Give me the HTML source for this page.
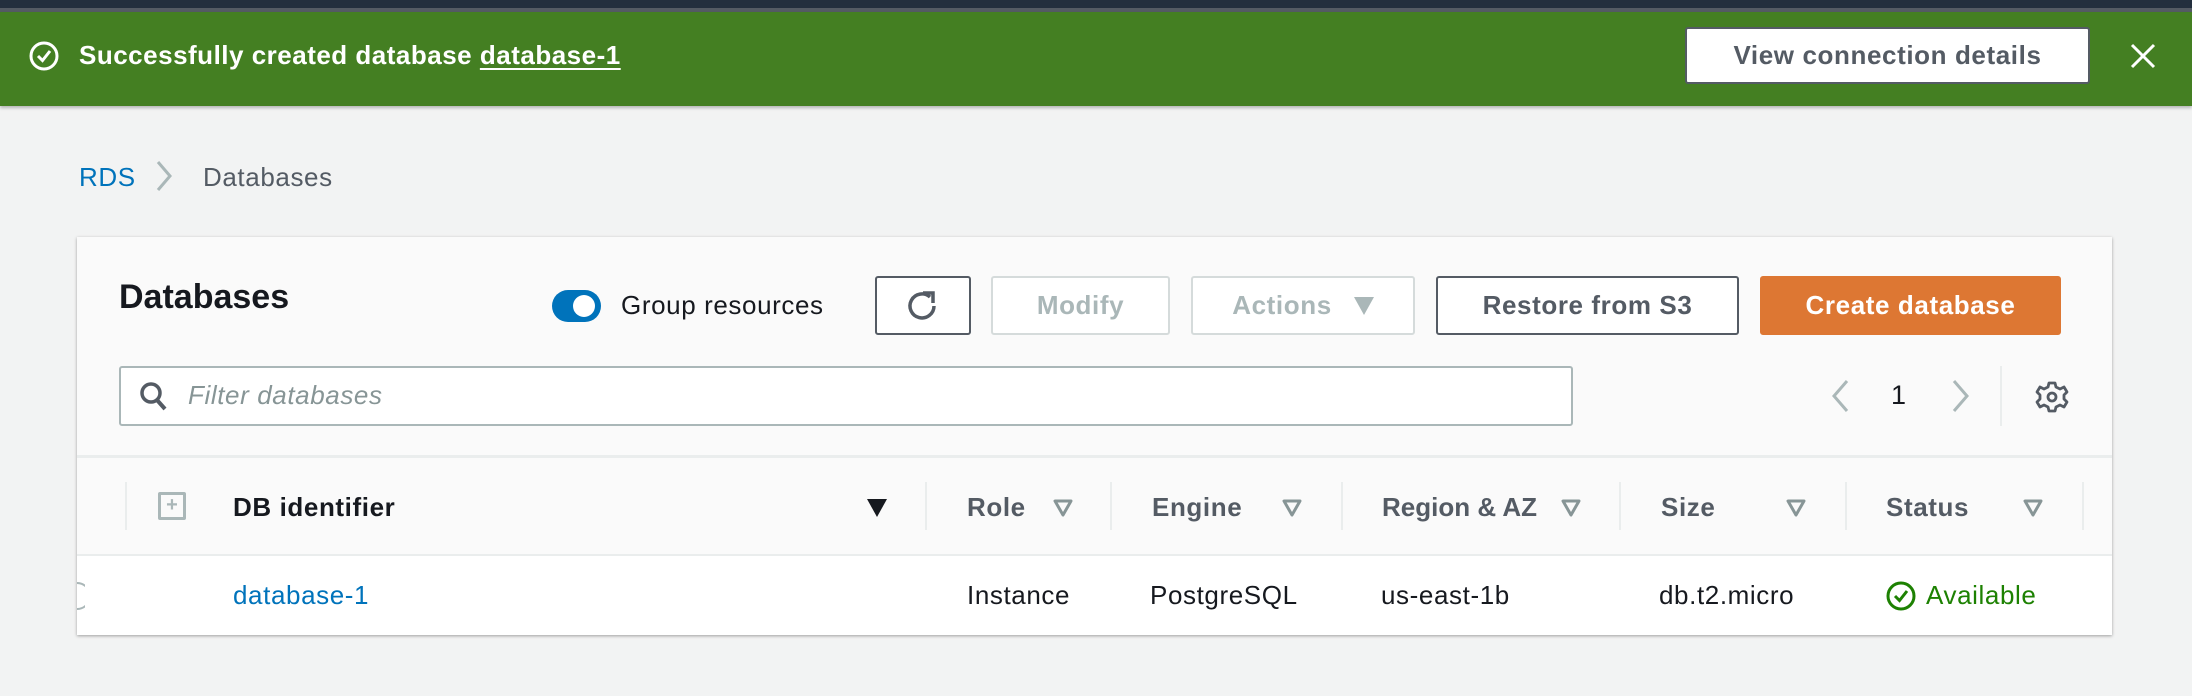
<!DOCTYPE html>
<html><head><meta charset="utf-8"><style>
*{margin:0;padding:0;box-sizing:border-box}
body{width:2192px;height:696px;background:#f2f3f3;font-family:"Liberation Sans",sans-serif;position:relative;overflow:hidden;color:#16191f;letter-spacing:0.6px}
.a{position:absolute;white-space:nowrap}
.btn{position:absolute;border:2px solid #545b64;border-radius:3px;background:#fff;font-weight:bold;font-size:26px;color:#545b64;display:flex;align-items:center;justify-content:center}
.dis{border-color:#d5dbdb;color:#aab7b8;background:#fff}
.hd{font-size:26px;font-weight:bold;color:#545b64;top:492px}
.vd{position:absolute;top:482px;width:2px;height:48px;background:#eaeded}
.tri{position:absolute;top:499px}
.cell{font-size:26px;top:580px;color:#16191f}
</style></head><body>
<div class="a" style="left:0;top:0;width:2192px;height:8px;background:#232f3e"></div>
<div class="a" style="left:0;top:8px;width:2192px;height:4px;background:#545b64"></div>
<div class="a" style="left:0;top:12px;width:2192px;height:94px;background:#447f22;box-shadow:0 2px 3px rgba(0,0,0,.25)"></div>
<svg class="a" style="left:28px;top:40px" width="32" height="32" viewBox="0 0 32 32"><circle cx="16" cy="16" r="13" fill="none" stroke="#fff" stroke-width="3"/><path d="M10 16l4.5 4.5L22 11" fill="none" stroke="#fff" stroke-width="3"/></svg>
<div class="a" style="left:79px;top:40px;font-size:26px;font-weight:bold;color:#fff;letter-spacing:0.5px">Successfully created database <span style="text-decoration:underline;text-underline-offset:4px">database-1</span></div>
<div class="btn" style="left:1685px;top:27px;width:405px;height:57px">View connection details</div>
<svg class="a" style="left:2129px;top:42px" width="28" height="28" viewBox="0 0 28 28"><path d="M3 3L25 25M25 3L3 25" stroke="#fff" stroke-width="3"/></svg>

<div class="a" style="left:79px;top:162px;font-size:26px;color:#0073bb">RDS</div>
<svg class="a" style="left:154px;top:160px" width="22" height="32" viewBox="0 0 22 32"><path d="M4 2l12 14L4 30" fill="none" stroke="#aab7b8" stroke-width="3"/></svg>
<div class="a" style="left:203px;top:162px;font-size:26px;color:#545b64">Databases</div>

<div class="a" style="left:77px;top:237px;width:2035px;height:398px;background:#fafafa;box-shadow:0 1px 3px rgba(0,0,0,.35)"></div>
<div class="a" style="left:77px;top:554px;width:2035px;height:81px;background:#fff;border-top:2px solid #eaeded"></div>
<div class="a" style="left:77px;top:455px;width:2035px;height:3px;background:#eaeded"></div>

<div class="a" style="left:119px;top:278px;font-size:34px;font-weight:bold;color:#16191f;letter-spacing:0">Databases</div>
<div class="a" style="left:552px;top:290px;width:49px;height:32px;border-radius:16px;background:#0073bb"></div>
<div class="a" style="left:573px;top:295px;width:22px;height:22px;border-radius:50%;background:#fff"></div>
<div class="a" style="left:621px;top:290px;font-size:26px;color:#16191f">Group resources</div>
<div class="btn" style="left:875px;top:276px;width:96px;height:59px"><svg width="34" height="34" viewBox="0 0 34 34"><path d="M24 8A12 12 0 1 0 28 17" fill="none" stroke="#545b64" stroke-width="3.5"/><path d="M17 4h10v10" fill="none" stroke="#545b64" stroke-width="3.5"/></svg></div>
<div class="btn dis" style="left:991px;top:276px;width:179px;height:59px">Modify</div>
<div class="btn dis" style="left:1191px;top:276px;width:224px;height:59px">Actions<span style="display:inline-block;margin-left:22px;width:0;height:0;border-left:10px solid transparent;border-right:10px solid transparent;border-top:18px solid #aab7b8"></span></div>
<div class="btn" style="left:1436px;top:276px;width:303px;height:59px;color:#545b64">Restore from S3</div>
<div class="btn" style="left:1760px;top:276px;width:301px;height:59px;background:#dd7733;border-color:#dd7733;color:#fff">Create database</div>

<div class="a" style="left:119px;top:366px;width:1454px;height:60px;background:#fff;border:2px solid #aab7b8;border-radius:3px"></div>
<svg class="a" style="left:138px;top:381px" width="32" height="32" viewBox="0 0 32 32"><circle cx="13" cy="12" r="9" fill="none" stroke="#545b64" stroke-width="3.5"/><path d="M19 19l8 9" stroke="#545b64" stroke-width="4"/></svg>
<div class="a" style="left:188px;top:380px;font-size:26px;font-style:italic;color:#879596">Filter databases</div>
<svg class="a" style="left:1829px;top:379px" width="22" height="34" viewBox="0 0 22 34"><path d="M18 2L5 17l13 15" fill="none" stroke="#aab7b8" stroke-width="3"/></svg>
<div class="a" style="left:1891px;top:380px;font-size:27px;color:#16191f">1</div>
<svg class="a" style="left:1950px;top:379px" width="22" height="34" viewBox="0 0 22 34"><path d="M4 2l13 15L4 32" fill="none" stroke="#aab7b8" stroke-width="3"/></svg>
<div class="a" style="left:2000px;top:366px;width:2px;height:60px;background:#eaeded"></div>
<svg class="a" style="left:2035px;top:380px" width="34" height="34" viewBox="0 0 34 34"><path d="M14 3h6l1 4 4 2 4-2 3 5-3 3v4l3 3-3 5-4-2-4 2-1 4h-6l-1-4-4-2-4 2-3-5 3-3v-4L2 12l3-5 4 2 4-2z" fill="none" stroke="#545b64" stroke-width="2.8" stroke-linejoin="round"/><circle cx="17" cy="17" r="4" fill="none" stroke="#545b64" stroke-width="2.8"/></svg>

<div class="vd" style="left:125px"></div>
<div class="a" style="left:158px;top:492px;width:28px;height:28px;border:3px solid #aab7b8;border-radius:2px;color:#aab7b8;font-size:20px;font-weight:bold;line-height:21px;text-align:center;letter-spacing:0">+</div>
<div class="a hd" style="left:233px;color:#16191f">DB identifier</div>
<div class="tri" style="left:867px;width:0;height:0;border-left:10px solid transparent;border-right:10px solid transparent;border-top:18px solid #16191f"></div>
<div class="vd" style="left:925px"></div>
<div class="a hd" style="left:967px">Role</div>
<svg class="tri" style="left:1053px" width="20" height="18" viewBox="0 0 20 18"><path d="M2 2h16L10 16z" fill="none" stroke="#879596" stroke-width="3" stroke-linejoin="round"/></svg>
<div class="vd" style="left:1110px"></div>
<div class="a hd" style="left:1152px">Engine</div>
<svg class="tri" style="left:1282px" width="20" height="18" viewBox="0 0 20 18"><path d="M2 2h16L10 16z" fill="none" stroke="#879596" stroke-width="3" stroke-linejoin="round"/></svg>
<div class="vd" style="left:1341px"></div>
<div class="a hd" style="left:1382px;letter-spacing:0">Region &amp; AZ</div>
<svg class="tri" style="left:1561px" width="20" height="18" viewBox="0 0 20 18"><path d="M2 2h16L10 16z" fill="none" stroke="#879596" stroke-width="3" stroke-linejoin="round"/></svg>
<div class="vd" style="left:1619px"></div>
<div class="a hd" style="left:1661px">Size</div>
<svg class="tri" style="left:1786px" width="20" height="18" viewBox="0 0 20 18"><path d="M2 2h16L10 16z" fill="none" stroke="#879596" stroke-width="3" stroke-linejoin="round"/></svg>
<div class="vd" style="left:1845px"></div>
<div class="a hd" style="left:1886px">Status</div>
<svg class="tri" style="left:2023px" width="20" height="18" viewBox="0 0 20 18"><path d="M2 2h16L10 16z" fill="none" stroke="#879596" stroke-width="3" stroke-linejoin="round"/></svg>
<div class="vd" style="left:2082px"></div>

<svg class="a" style="left:77px;top:582px" width="8" height="28" viewBox="0 0 8 28"><path d="M0 1A13 13 0 0 1 0 27" fill="none" stroke="#aab7b8" stroke-width="2"/></svg>
<div class="a cell" style="left:233px;color:#0073bb">database-1</div>
<div class="a cell" style="left:967px">Instance</div>
<div class="a cell" style="left:1150px">PostgreSQL</div>
<div class="a cell" style="left:1381px">us-east-1b</div>
<div class="a cell" style="left:1659px">db.t2.micro</div>
<svg class="a" style="left:1885px;top:580px" width="32" height="32" viewBox="0 0 32 32"><circle cx="16" cy="16" r="13" fill="none" stroke="#1d8102" stroke-width="3"/><path d="M10 16l4.5 4.5L22 11" fill="none" stroke="#1d8102" stroke-width="3"/></svg>
<div class="a cell" style="left:1926px;color:#1d8102">Available</div>
</body></html>
